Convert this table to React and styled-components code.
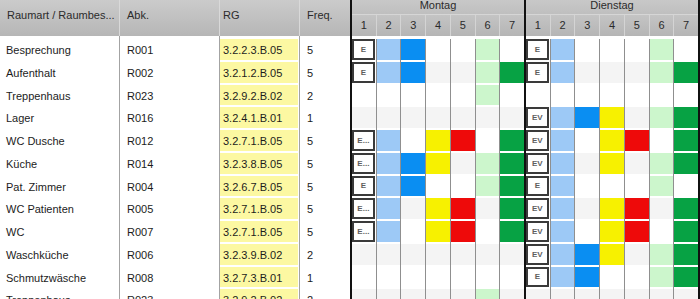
import styled, { createGlobalStyle } from "styled-components";

const ROW_H = 22.75;

const COLORS = {
	lb: "#9dc9f6",
	b: "#0a8ef2",
	y: "#f7f100",
	r: "#ee0a0a",
	lg: "#ccf6cc",
	g: "#07a244",
};

// the third day only shows its left edge in the window
const DAYS = ["Montag", "Dienstag", ""];

// day cells: "." empty, "@X" box with label X, else colour key
const rows = [
	{ name: "Besprechung", abk: "R001", rg: "3.2.2.3.B.05", freq: "5", days: ["@E lb b . . lg .", "@E lb . . . lg .", ". . . . . . ."] },
	{ name: "Aufenthalt", abk: "R002", rg: "3.2.1.2.B.05", freq: "5", days: ["@E lb b . . lg g", "@E lb . . . lg g", ". . . . . . ."] },
	{ name: "Treppenhaus", abk: "R023", rg: "3.2.9.2.B.02", freq: "2", days: [". . . . . lg .", ". . . . . . .", ". . . . . . ."] },
	{ name: "Lager", abk: "R016", rg: "3.2.4.1.B.01", freq: "1", days: [". . . . . . .", "@EV lb b y . lg g", ". . . . . . ."] },
	{ name: "WC Dusche", abk: "R012", rg: "3.2.7.1.B.05", freq: "5", days: ["@E... lb . y r . g", "@EV lb . y r . g", ". . . . . . ."] },
	{ name: "Küche", abk: "R014", rg: "3.2.3.8.B.05", freq: "5", days: ["@E... lb b y . lg g", "@EV lb . y . lg g", ". . . . . . ."] },
	{ name: "Pat. Zimmer", abk: "R004", rg: "3.2.6.7.B.05", freq: "5", days: ["@E lb b . . lg g", "@E lb . . . lg .", ". . . . . . ."] },
	{ name: "WC Patienten", abk: "R005", rg: "3.2.7.1.B.05", freq: "5", days: ["@E... lb . y r . g", "@EV lb . y r . g", ". . . . . . ."] },
	{ name: "WC", abk: "R007", rg: "3.2.7.1.B.05", freq: "5", days: ["@E... lb . y r . g", "@EV lb . y r . g", ". . . . . . ."] },
	{ name: "Waschküche", abk: "R006", rg: "3.2.3.9.B.02", freq: "2", days: [". . . . . . .", "@EV lb b y . lg g", ". . . . . . ."] },
	{ name: "Schmutzwäsche", abk: "R008", rg: "3.2.7.3.B.01", freq: "1", days: [". . . . . . .", "@E lb b . . lg g", ". . . . . . ."] },
	{ name: "Treppenhaus", abk: "R023", rg: "3.2.9.2.B.02", freq: "2", days: [". . . . . lg .", ". . . . . . .", ". . . . . . ."] },
];

const GlobalStyle = createGlobalStyle`
	html, body {
		margin: 0;
		padding: 0;
		background: #fff;
		overflow: hidden;
	}
	body {
		font-family: "Liberation Sans", Arial, sans-serif;
		font-size: 11px;
		color: #1c1c1c;
	}
`;

export default function App() {
	return (
		<>
			<GlobalStyle />
			<Table>
				<HeaderRow>
					<HeadCell $w={120} $pad={7} $line>
						Raumart / Raumbes...
					</HeadCell>
					<HeadCell $w={100} $pad={7} $line>
						Abk.
					</HeadCell>
					<HeadCell $w={80} $pad={3} $line>
						RG
					</HeadCell>
					<HeadCell $w={50} $pad={7}>
						Freq.
					</HeadCell>
					{DAYS.map((day, d) => (
						<DayHead key={d}>
							<DayTitle>{day}</DayTitle>
							<DayNums>
								{[1, 2, 3, 4, 5, 6, 7].map((n) => (
									<Num key={n}>{n}</Num>
								))}
							</DayNums>
						</DayHead>
					))}
				</HeaderRow>
				{rows.map((row, i) => (
					<Row key={i}>
						<TextCell $w={120} $pad={6} $line>
							{row.name}
						</TextCell>
						<TextCell $w={100} $pad={7} $line>
							{row.abk}
						</TextCell>
						<RgCell>
							<RgFill>{row.rg}</RgFill>
						</RgCell>
						<TextCell $w={50} $pad={7}>
							{row.freq}
						</TextCell>
						{row.days.map((day, d) => (
							<DayGroup key={d}>
								{day.split(" ").map((c, k) => (
									<DayCell key={k}>
										{c.startsWith("@") ? (
											<EBox>{c.slice(1)}</EBox>
										) : (
											<Fill $color={COLORS[c]} $alt={i % 2 === 1} />
										)}
									</DayCell>
								))}
							</DayGroup>
						))}
					</Row>
				))}
			</Table>
		</>
	);
}

const Table = styled.div`
	width: 700px;
	height: 299px;
	overflow: hidden;
	display: flex;
	flex-direction: column;
`;

const HeaderRow = styled.div`
	display: flex;
	height: 36px;
	flex-shrink: 0;
`;

const HeadCell = styled.div`
	width: ${(p) => p.$w}px;
	flex-shrink: 0;
	box-sizing: border-box;
	padding: 8px 0 0 ${(p) => p.$pad}px;
	line-height: 14px;
	color: #2b2b2b;
	white-space: nowrap;
	background: linear-gradient(#cbcbcb, #b6b6b6);
	border-right: ${(p) => (p.$line ? "1px solid #d9d9d9" : "none")};
`;

const DayHead = styled.div`
	width: 174px;
	flex-shrink: 0;
	box-sizing: border-box;
	border-left: 2px solid #111;
	display: flex;
	flex-direction: column;
`;

const DayTitle = styled.div`
	height: 15px;
	line-height: 10px;
	text-align: center;
	box-sizing: border-box;
	color: #2b2b2b;
	background: linear-gradient(#c8c8c8, #bfbfbf);
	border-bottom: 1px solid #d6d6d6;
`;

const DayNums = styled.div`
	flex: 1;
	display: flex;
	background: linear-gradient(#c4c4c4, #b5b5b5);
`;

const Num = styled.div`
	flex: 1;
	text-align: center;
	line-height: 21px;
	color: #2b2b2b;
	border-right: 1px solid #d4d4d4;
	&:last-child {
		border-right: none;
	}
`;

const Row = styled.div`
	display: flex;
	height: ${ROW_H}px;
	flex-shrink: 0;
	&:nth-child(2) {
		height: ${ROW_H + 3}px;
	}
	&:nth-child(2) > * {
		padding-top: 3px;
	}
`;

const TextCell = styled.div`
	width: ${(p) => p.$w}px;
	flex-shrink: 0;
	box-sizing: border-box;
	padding-left: ${(p) => p.$pad}px;
	line-height: ${ROW_H}px;
	white-space: nowrap;
	overflow: hidden;
	border-right: ${(p) => (p.$line ? "1px solid #a3a3a3" : "none")};
`;

const RgCell = styled.div`
	width: 80px;
	flex-shrink: 0;
	box-sizing: border-box;
	padding: 0 1px 2px 0;
	border-right: 1px solid #a3a3a3;
`;

const RgFill = styled.div`
	height: 100%;
	box-sizing: border-box;
	padding-left: 3px;
	line-height: ${ROW_H}px;
	white-space: nowrap;
	background: #fcf8a2;
`;

const DayGroup = styled.div`
	width: 174px;
	flex-shrink: 0;
	box-sizing: border-box;
	border-left: 2px solid #111;
	display: flex;
`;

const DayCell = styled.div`
	flex: 1;
	min-width: 0;
	box-sizing: border-box;
	padding-bottom: 2px;
	border-right: 1px solid #8f8f8f;
	background: #fff;
	&:last-child {
		border-right: none;
	}
`;

const Fill = styled.div`
	height: 100%;
	background: ${(p) => p.$color || (p.$alt ? "#f4f4f4" : "#fff")};
`;

const EBox = styled.div`
	height: 100%;
	margin-right: 1px;
	box-sizing: border-box;
	border: 2px solid #3a3a3a;
	background: #fff;
	display: flex;
	align-items: center;
	justify-content: center;
	font-size: 8px;
	font-weight: bold;
	color: #5e5e5e;
	white-space: nowrap;
	overflow: hidden;
`;
